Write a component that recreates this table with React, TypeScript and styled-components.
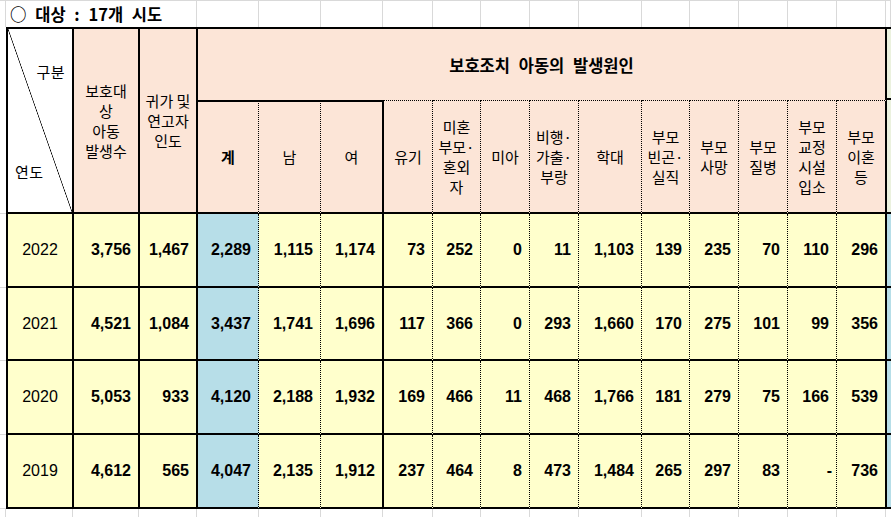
import React from 'react';
import styled, { createGlobalStyle } from 'styled-components';

const GlobalStyle = createGlobalStyle`
  *, *::before, *::after { box-sizing: border-box; }
  html, body { margin: 0; padding: 0; background: #ffffff; }
  body { width: 891px; height: 517px; overflow: hidden; }
`;

const KR = `"Noto Sans CJK KR", "Noto Sans", sans-serif`;
const NUM = `"Liberation Sans", Arial, sans-serif`;

const PEACH = '#fce5d7';
const YELLOW = '#ffffcc';
const BLUE = '#b7dee8';
const GREEN = '#ebf1de';
const GRID = '#d9d9d9';

type Line = 'thick' | 'dotted' | 'none';
const line = (l: Line) => (l === 'thick' ? '2px solid #000' : l === 'dotted' ? '1px dotted #000' : 'none');

const RULER_COLS = '6px 67px 66px 58px 62px 62px 62px 50px 48px 49px 49px 63px 48px 49px 49px 49px 49px 1fr';
const TABLE_COLS = '6px 68px 66px 58px 61px 62px 63px 49px 48px 49px 49px 63px 48px 49px 49px 49px 50px 1fr';

const Sheet = styled.div`
  width: 891px;
  height: 517px;
  overflow: hidden;
  display: flex;
  flex-direction: column;
  background: #fff;
`;

const TitleRow = styled.div`
  display: grid;
  grid-template-columns: ${RULER_COLS};
  height: 27px;
  border-top: 1px solid ${GRID};
`;

const RulerCell = styled.div`
  border-right: 1px solid ${GRID};
`;

const TitleText = styled.div`
  grid-column: span 3;
  display: flex;
  align-items: center;
  padding-left: 4px;
  padding-bottom: 1px;
  font: 700 16.5px/20px ${KR};
  word-spacing: 5px;
  color: #000;
  white-space: nowrap;
  border-right: 1px solid ${GRID};
`;

const FooterRow = styled.div`
  display: grid;
  grid-template-columns: ${RULER_COLS};
  flex: 1;
`;

const Table = styled.div`
  display: grid;
  grid-template-columns: ${TABLE_COLS};
  grid-template-rows: 73px 114px 74px 73px 74px 74px;
  color: #000;
`;

const Gutter = styled.div<{ $rows?: number }>`
  grid-row: span ${p => p.$rows ?? 1};
  border-bottom: 1px solid ${GRID};
`;

const CornerCell = styled.div`
  grid-row: span 2;
  border: 2px solid #000;
  background: linear-gradient(to top right, #fff calc(50% - 0.7px), #000 50%, #fff calc(50% + 0.7px));
  display: flex;
  flex-direction: column;
  justify-content: space-between;
  padding: 33px 7px 30px 7px;
  font: 400 15px/20px ${KR};
`;

const CornerLabel = styled.span<{ $end?: boolean }>`
  align-self: ${p => (p.$end ? 'flex-end' : 'flex-start')};
  white-space: nowrap;
  letter-spacing: 0.5px;
`;

const SideHead = styled.div`
  grid-row: span 2;
  border-top: 2px solid #000;
  border-right: 2px solid #000;
  border-bottom: 2px solid #000;
  background: ${PEACH};
  display: flex;
  align-items: center;
  justify-content: center;
  text-align: center;
  font: 400 15px/20px ${KR};
  white-space: nowrap;
`;

const MainHead = styled.div`
  grid-column: span 13;
  border-top: 2px solid #000;
  border-right: 2px solid #000;
  background: ${PEACH};
  display: flex;
  align-items: center;
  justify-content: center;
  font: 700 16.5px/20px ${KR};
  padding-top: 1px;
  word-spacing: 5px;
`;

const ExtraHead = styled.div<{ $top?: boolean }>`
  border-top: ${p => (p.$top ? '2px solid #000' : 'none')};
  border-bottom: 2px solid #000;
  background: ${GREEN};
`;

const SubHead = styled.div<{ $top: Line; $right: Line; $bold?: boolean }>`
  border-top: ${p => line(p.$top)};
  border-right: ${p => line(p.$right)};
  border-bottom: 2px solid #000;
  background: ${PEACH};
  display: flex;
  align-items: center;
  justify-content: center;
  text-align: center;
  font: ${p => (p.$bold ? 700 : 400)} 15px/20px ${KR};
  white-space: nowrap;
`;

const YearCell = styled.div`
  border-left: 2px solid #000;
  border-right: 2px solid #000;
  border-bottom: 2px solid #000;
  background: ${YELLOW};
  display: flex;
  align-items: center;
  justify-content: center;
  font: 400 16px/20px ${NUM};
`;

const NumCell = styled.div<{ $right: Line; $blue?: boolean; $pad?: number }>`
  border-right: ${p => line(p.$right)};
  border-bottom: 2px solid #000;
  background: ${p => (p.$blue ? BLUE : YELLOW)};
  display: flex;
  align-items: center;
  justify-content: flex-end;
  padding-right: ${p => p.$pad ?? 7}px;
  font: 700 16px/20px ${NUM};
`;

const ExtraData = styled.div`
  border-bottom: 2px solid #000;
  background: ${BLUE};
`;

type Sub = { lines: string[]; top: Line; right: Line; bold?: boolean };

const SUBS: Sub[] = [
  { lines: ['계'], top: 'thick', right: 'dotted', bold: true },
  { lines: ['남'], top: 'thick', right: 'dotted' },
  { lines: ['여'], top: 'thick', right: 'thick' },
  { lines: ['유기'], top: 'dotted', right: 'dotted' },
  { lines: ['미혼', '부모·', '혼외', '자'], top: 'dotted', right: 'dotted' },
  { lines: ['미아'], top: 'dotted', right: 'dotted' },
  { lines: ['비행·', '가출·', '부랑'], top: 'dotted', right: 'dotted' },
  { lines: ['학대'], top: 'dotted', right: 'dotted' },
  { lines: ['부모', '빈곤·', '실직'], top: 'dotted', right: 'dotted' },
  { lines: ['부모', '사망'], top: 'dotted', right: 'dotted' },
  { lines: ['부모', '질병'], top: 'dotted', right: 'dotted' },
  { lines: ['부모', '교정', '시설', '입소'], top: 'dotted', right: 'dotted' },
  { lines: ['부모', '이혼', '등'], top: 'dotted', right: 'thick' },
];

const DATA_RIGHT: Line[] = [
  'thick', 'thick',
  'dotted', 'dotted', 'thick',
  'dotted', 'dotted', 'dotted', 'dotted', 'dotted', 'dotted', 'dotted', 'dotted', 'dotted', 'thick',
];

const ROWS: { year: string; values: string[] }[] = [
  { year: '2022', values: ['3,756', '1,467', '2,289', '1,115', '1,174', '73', '252', '0', '11', '1,103', '139', '235', '70', '110', '296'] },
  { year: '2021', values: ['4,521', '1,084', '3,437', '1,741', '1,696', '117', '366', '0', '293', '1,660', '170', '275', '101', '99', '356'] },
  { year: '2020', values: ['5,053', '933', '4,120', '2,188', '1,932', '169', '466', '11', '468', '1,766', '181', '279', '75', '166', '539'] },
  { year: '2019', values: ['4,612', '565', '4,047', '2,135', '1,912', '237', '464', '8', '473', '1,484', '265', '297', '83', '-', '736'] },
];

const RULER_COUNT = 15;

const Multi: React.FC<{ lines: string[] }> = ({ lines }) => (
  <span>
    {lines.map((l, i) => (
      <React.Fragment key={i}>
        {i > 0 && <br />}
        {l}
      </React.Fragment>
    ))}
  </span>
);

export default function App() {
  return (
    <>
      <GlobalStyle />
      <Sheet>
        <TitleRow>
          <RulerCell />
          <TitleText>○ 대상 : 17개 시도</TitleText>
          {Array.from({ length: RULER_COUNT - 1 }).map((_, i) => (
            <RulerCell key={i} />
          ))}
        </TitleRow>

        <Table>
          <Gutter $rows={2} />
          <CornerCell>
            <CornerLabel $end>구분</CornerLabel>
            <CornerLabel>연도</CornerLabel>
          </CornerCell>
          <SideHead>
            <Multi lines={['보호대', '상', '아동', '발생수']} />
          </SideHead>
          <SideHead>
            <Multi lines={['귀가 및', '연고자', '인도']} />
          </SideHead>
          <MainHead>보호조치 아동의 발생원인</MainHead>
          <ExtraHead $top />
          {SUBS.map((s, i) => (
            <SubHead key={i} $top={s.top} $right={s.right} $bold={s.bold}>
              <Multi lines={s.lines} />
            </SubHead>
          ))}
          <ExtraHead />

          {ROWS.map(r => (
            <React.Fragment key={r.year}>
              <Gutter />
              <YearCell>{r.year}</YearCell>
              {r.values.map((v, i) => (
                <NumCell key={i} $right={DATA_RIGHT[i]} $blue={i === 2} $pad={v === '-' ? 4 : 7}>
                  {v}
                </NumCell>
              ))}
              <ExtraData />
            </React.Fragment>
          ))}
        </Table>

        <FooterRow>
          {Array.from({ length: RULER_COUNT + 2 }).map((_, i) => (
            <RulerCell key={i} />
          ))}
        </FooterRow>
      </Sheet>
    </>
  );
}
